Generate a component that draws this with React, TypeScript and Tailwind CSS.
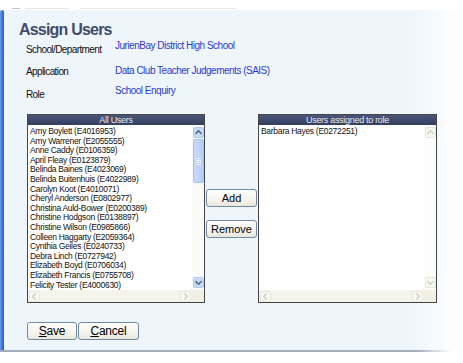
import { FC, ReactNode } from 'react';
import clsx from 'clsx';

const allUsers = [
  'Amy Boylett (E4016953)',
  'Amy Warrener (E2055555)',
  'Anne Caddy (E0106359)',
  'April Fleay (E0123879)',
  'Belinda Baines (E4023069)',
  'Belinda Buitenhuis (E4022989)',
  'Carolyn Koot (E4010071)',
  'Cheryl Anderson (E0802977)',
  'Christina Auld-Bower (E0200389)',
  'Christine Hodgson (E0138897)',
  'Christine Wilson (E0985866)',
  'Colleen Haggarty (E2059364)',
  'Cynthia Geiles (E0240733)',
  'Debra Linch (E0727942)',
  'Elizabeth Boyd (E0706034)',
  'Elizabeth Francis (E0755708)',
  'Felicity Tester (E4000630)',
];

const assigned = ['Barbara Hayes (E0272251)'];

const details = [
  { label: 'School/Department', value: 'JurienBay District High School', labelPad: 'pt-[5px]', valuePad: 'pt-px' },
  { label: 'Application', value: 'Data Club Teacher Judgements (SAIS)', labelPad: 'pt-[4px]', valuePad: 'pt-[3px]' },
  { label: 'Role', value: 'School Enquiry', labelPad: 'pt-[4px]', valuePad: 'pt-0' },
];

type Dir = 'up' | 'down' | 'left' | 'right';

const chevron: Record<Dir, string> = {
  up: 'M2 6 L5 3 L8 6',
  down: 'M2 4 L5 7 L8 4',
  left: 'M6 2 L3 5 L6 8',
  right: 'M4 2 L7 5 L4 8',
};

const ArrowBox: FC<{ dir: Dir; active?: boolean; className?: string }> = ({ dir, active, className }) => (
  <div
    className={clsx(
      'flex h-[11px] w-[11px] items-center justify-center rounded-[2px] border',
      active ? 'border-[#b4c8ee] bg-[#c8d8f8]' : 'border-[#e6e6dc] bg-[#f8f8f2]',
      className
    )}
  >
    <svg width="9" height="9" viewBox="0 0 10 10" fill="none">
      <path d={chevron[dir]} stroke={active ? '#4d6188' : '#cfcfc6'} strokeWidth={1.6} strokeLinecap="round" strokeLinejoin="round" />
    </svg>
  </div>
);

const VScroll: FC<{ active?: boolean }> = ({ active }) => (
  <div className={clsx('flex w-[12px] flex-col items-center py-[2px]', active ? 'bg-[#fafaf6]' : 'bg-[#fcfcfa]')}>
    <ArrowBox dir="up" active={active} />
    {active ? (
      <div className="mt-px flex h-[44px] w-[11px] flex-col items-center justify-center gap-px rounded-[2px] border border-[#a9c0ec] bg-[linear-gradient(to_right,#c9d9fa,#b8cdf6)]">
        <div className="h-px w-[5px] bg-[#eef3fd]" />
        <div className="h-px w-[5px] bg-[#eef3fd]" />
        <div className="h-px w-[5px] bg-[#eef3fd]" />
        <div className="h-px w-[5px] bg-[#eef3fd]" />
      </div>
    ) : null}
    <div className="flex-1" />
    <ArrowBox dir="down" active={active} />
  </div>
);

const ListBox: FC<{ title: string; items: string[]; active?: boolean; className?: string }> = ({
  title,
  items,
  active,
  className,
}) => (
  <div className={clsx('flex h-[189px] flex-col border border-[#454545] bg-white', className)}>
    <div className="h-[10px] bg-[linear-gradient(#4a5678,#343f60)] text-center text-[9px] leading-[10px] tracking-[-0.3px] text-[#e4e8f2] font-['Liberation_Sans',sans-serif]">
      {title}
    </div>
    <div className="flex min-h-0 flex-1">
      <div className="flex-1 overflow-hidden pl-[2px] pt-[2px] font-['Liberation_Sans',sans-serif] text-[8.5px] leading-[9.6px] tracking-[-0.3px] text-[#111]">
        {items.map(item => (
          <div key={item} className="whitespace-nowrap">
            {item}
          </div>
        ))}
      </div>
      <VScroll active={active} />
    </div>
    <div className="flex h-[12px] bg-[#f5f4ea]">
      <div className="flex flex-1 items-center justify-between px-[1px]">
        <ArrowBox dir="left" />
        <ArrowBox dir="right" />
      </div>
      <div className="w-[12px] bg-[#f1f0e2]" />
    </div>
  </div>
);

const XpButton: FC<{ children: ReactNode; className?: string }> = ({ children, className }) => (
  <button
    className={clsx(
      'flex items-center justify-center rounded-[3px] border border-[#7089a6] bg-[linear-gradient(#ffffff,#f3f2ea_70%,#e8e6da)] text-black',
      "font-['Liberation_Sans',sans-serif]",
      className
    )}
  >
    {children}
  </button>
);

export default function App() {
  return (
    <div className="h-[363px] w-[463px] overflow-hidden bg-white font-['Liberation_Sans',sans-serif]">
      {/* faint remains of the page above */}
      <div className="flex h-[10px] items-start pt-[8px]">
        <div className="ml-[12px] h-px w-[8px] bg-[#c4c4c8]" />
        <div className="ml-[5px] h-px w-[44px] bg-[#ece2ea]" />
        <div className="ml-[10px] h-px w-[157px] bg-[#eee4ec]" />
      </div>

      <div className="flex h-[340px]">
        <div className="w-[4px] rounded-t-[2px] bg-[linear-gradient(to_right,#6b9ae8,#1f5ad2)]" />
        <div className="flex flex-1 flex-col bg-[linear-gradient(to_right,#eef5fb_88%,#ffffff)] pl-[15px] pt-[11px]">
          <h1 className="h-[18px] text-[16px] font-bold leading-[18px] tracking-[-0.8px] text-[#3f4b6b]">Assign Users</h1>

          <div className="ml-[7px] flex flex-col">
            {details.map(d => (
              <div key={d.label} className="flex h-[23px]">
                <div className={clsx('w-[89px] text-[10px] leading-[12px] tracking-[-0.6px] text-[#111]', d.labelPad)}>
                  {d.label}
                </div>
                <div className={clsx('text-[10px] leading-[12px] tracking-[-0.5px] text-[#2b3bcf]', d.valuePad)}>
                  {d.value}
                </div>
              </div>
            ))}
          </div>

          <div className="ml-[8px] mt-[6px] flex">
            <ListBox title="All Users" items={allUsers} active className="w-[178px]" />
            <div className="ml-[1px] flex flex-col gap-[13px] pt-[75px]">
              <XpButton className="h-[18px] w-[51px] text-[11px]">Add</XpButton>
              <XpButton className="h-[18px] w-[51px] text-[11px]">Remove</XpButton>
            </div>
            <ListBox title="Users assigned to role" items={assigned} className="ml-[1px] w-[179px]" />
          </div>

          <div className="ml-[8px] mt-[19px] flex gap-px">
            <XpButton className="h-[18px] w-[50px] text-[12px] tracking-[-0.2px]">
              <span className="underline">S</span>ave
            </XpButton>
            <XpButton className="h-[18px] w-[61px] text-[12px] tracking-[-0.2px]">
              <span className="underline">C</span>ancel
            </XpButton>
          </div>
        </div>
      </div>

      <div className="h-[2px] w-[452px] bg-[linear-gradient(to_right,#a4acbc_92%,#ffffff)]" />
    </div>
  );
}
